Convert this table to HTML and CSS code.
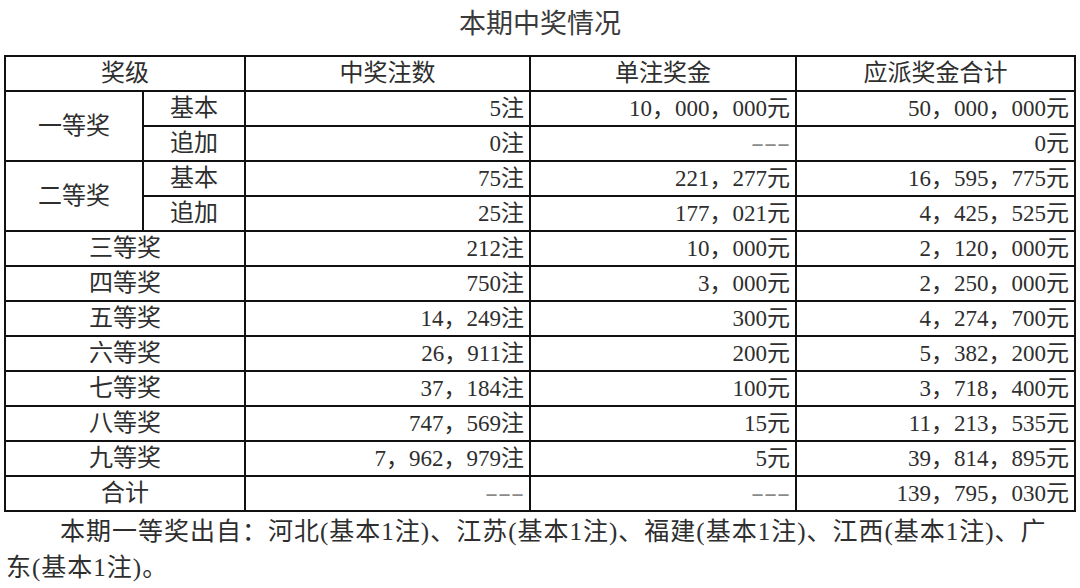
FILE: index.html
```html
<!DOCTYPE html>
<html lang="zh-CN">
<head>
<meta charset="utf-8">
<title>本期中奖情况</title>
<link rel="stylesheet" href="styles.css">
</head>
<body>
<div class="page">
  <h1 class="title">本期中奖情况</h1>
  <table class="prize-table">
    <colgroup>
      <col class="c-level">
      <col class="c-sub">
      <col class="c-count">
      <col class="c-unit">
      <col class="c-total">
    </colgroup>
    <thead>
      <tr>
        <th colspan="2">奖级</th>
        <th>中奖注数</th>
        <th>单注奖金</th>
        <th>应派奖金合计</th>
      </tr>
    </thead>
    <tbody>
      <tr>
        <td class="label" rowspan="2">一等奖</td>
        <td class="label">基本</td>
        <td class="num">5注</td>
        <td class="num">10，000，000元</td>
        <td class="num">50，000，000元</td>
      </tr>
      <tr>
        <td class="label">追加</td>
        <td class="num">0注</td>
        <td class="num"><span class="dash">---</span></td>
        <td class="num">0元</td>
      </tr>
      <tr>
        <td class="label" rowspan="2">二等奖</td>
        <td class="label">基本</td>
        <td class="num">75注</td>
        <td class="num">221，277元</td>
        <td class="num">16，595，775元</td>
      </tr>
      <tr>
        <td class="label">追加</td>
        <td class="num">25注</td>
        <td class="num">177，021元</td>
        <td class="num">4，425，525元</td>
      </tr>
      <tr>
        <td class="label" colspan="2">三等奖</td>
        <td class="num">212注</td>
        <td class="num">10，000元</td>
        <td class="num">2，120，000元</td>
      </tr>
      <tr>
        <td class="label" colspan="2">四等奖</td>
        <td class="num">750注</td>
        <td class="num">3，000元</td>
        <td class="num">2，250，000元</td>
      </tr>
      <tr>
        <td class="label" colspan="2">五等奖</td>
        <td class="num">14，249注</td>
        <td class="num">300元</td>
        <td class="num">4，274，700元</td>
      </tr>
      <tr>
        <td class="label" colspan="2">六等奖</td>
        <td class="num">26，911注</td>
        <td class="num">200元</td>
        <td class="num">5，382，200元</td>
      </tr>
      <tr>
        <td class="label" colspan="2">七等奖</td>
        <td class="num">37，184注</td>
        <td class="num">100元</td>
        <td class="num">3，718，400元</td>
      </tr>
      <tr>
        <td class="label" colspan="2">八等奖</td>
        <td class="num">747，569注</td>
        <td class="num">15元</td>
        <td class="num">11，213，535元</td>
      </tr>
      <tr>
        <td class="label" colspan="2">九等奖</td>
        <td class="num">7，962，979注</td>
        <td class="num">5元</td>
        <td class="num">39，814，895元</td>
      </tr>
      <tr>
        <td class="label" colspan="2">合计</td>
        <td class="num"><span class="dash">---</span></td>
        <td class="num"><span class="dash">---</span></td>
        <td class="num">139，795，030元</td>
      </tr>
    </tbody>
  </table>
  <p class="note">本期一等奖出自：河北(基本1注)、江苏(基本1注)、福建(基本1注)、江西(基本1注)、广东(基本1注)。</p>
</div>
</body>
</html>
```

FILE: styles.css
```css
html, body {
  margin: 0;
  padding: 0;
  background: #ffffff;
}

body {
  font-family: "Liberation Serif", "Noto Sans CJK SC", serif;
  color: #2e2e2e;
}

.page {
  width: 1080px;
  height: 588px;
  overflow: hidden;
}

.title {
  margin: 0;
  height: 49px;
  line-height: 49px;
  font-size: 27px;
  font-weight: normal;
  text-align: center;
  color: #3a3a3a;
}

.prize-table {
  border-collapse: collapse;
  table-layout: fixed;
  width: 1070px;
  margin: 6px 0 0 4px;
}

.c-level { width: 138px; }
.c-sub { width: 102px; }
.c-count { width: 285px; }
.c-unit { width: 266px; }
.c-total { width: 279px; }

.prize-table th,
.prize-table td {
  border: 2px solid #111111;
  height: 33px;
  padding: 0 5px;
  font-size: 24px;
  font-weight: normal;
  line-height: 33px;
  vertical-align: middle;
  white-space: nowrap;
}

.prize-table th,
.prize-table .label {
  text-align: center;
}

.prize-table .num {
  text-align: right;
  font-size: 23px;
}

.dash {
  display: inline-block;
  color: #8a8a8a;
  transform: scaleX(1.7);
  transform-origin: right center;
}

.note {
  margin: 2px 0 0 0;
  padding: 0 0 0 6px;
  width: 1066px;
  font-size: 25px;
  line-height: 36px;
  text-indent: 54px;
  letter-spacing: 1px;
  color: #2e2e2e;
}
```
